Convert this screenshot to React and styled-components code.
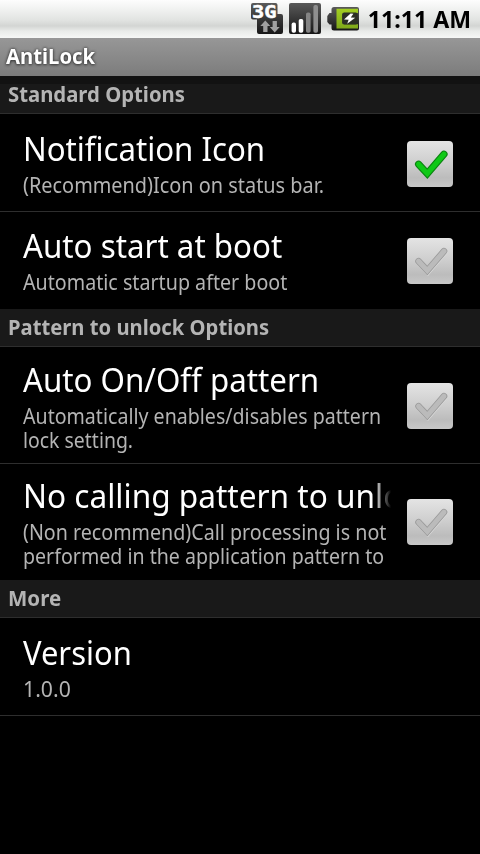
import React, { useState } from 'react';
import styled, { createGlobalStyle } from 'styled-components';

const GlobalStyle = createGlobalStyle`
  * {
    box-sizing: border-box;
  }
  body {
    margin: 0;
    background-color: #000000;
    font-family: "Noto Sans", "Open Sans", sans-serif;
  }
`;

const Screen = styled.div`
  display: flex;
  flex-direction: column;
  width: 480px;
  height: 854px;
  overflow: hidden;
  background-color: #000000;
`;

const StatusBar = styled.div`
  display: flex;
  align-items: center;
  justify-content: flex-end;
  height: 38px;
  padding-right: 9px;
  background: linear-gradient(#fdfdfd 0%, #f2f3f2 22%, #e2e4e2 52%, #d3d5d3 68%, #e9ebe9 82%, #f6f7f6 100%);
`;

const StatusIcons = styled.svg`
  width: 110px;
  height: 38px;
  flex-shrink: 0;
`;

// horizontally condensed text, $fit is the width ratio
const Text = styled.span`
  display: inline-block;
  white-space: nowrap;
  transform: scaleX(${({ $fit }) => $fit || 1});
  transform-origin: ${({ $from }) => $from || 'left'} center;
`;

const Clock = styled.div`
  width: 111px;
  font-size: 24px;
  font-weight: 700;
  line-height: 38px;
  text-align: right;
  color: #000000;
`;

const TitleBar = styled.div`
  height: 38px;
  padding-left: 6px;
  font-size: 21px;
  font-weight: 700;
  line-height: 36px;
  color: #ffffff;
  text-shadow: 0 0 3px #333333, 0 1px 3px #444444;
  background: linear-gradient(#979797, #7c7c7c);
`;

const Category = styled.div`
  height: 38px;
  padding-left: 8px;
  font-size: 21px;
  font-weight: 700;
  line-height: 37px;
  color: #b4b4b4;
  background-color: #191919;
  border-bottom: 1px solid #2e2e2e;
  box-shadow: ${({ $shaded }) => ($shaded ? 'inset 0 8px 0 #121212' : 'none')};
`;

const Row = styled.div`
  display: flex;
  height: ${({ $height }) => $height}px;
  padding-left: 23px;
  padding-right: 27px;
  border-bottom: ${({ $divider }) => ($divider ? '1px solid #2e2e2e' : 'none')};
`;

const Texts = styled.div`
  width: 369px;
  padding-top: ${({ $top }) => $top}px;
`;

const RowTitle = styled.div`
  height: 44px;
  font-size: 33px;
  line-height: 39px;
  color: #ffffff;
  mask-image: ${({ $fade }) => ($fade ? 'linear-gradient(to right, #000 349px, rgba(0, 0, 0, 0.25) 364px, transparent 368px)' : 'none')};
`;

const Summary = styled.div`
  height: 24px;
  font-size: 21px;
  line-height: 24px;
  color: #b4b4b4;
`;

const CheckButton = styled.button`
  width: 46px;
  height: 46px;
  margin-left: auto;
  margin-top: ${({ $top }) => $top}px;
  padding: 0;
  border: none;
  background: none;
  flex-shrink: 0;

  svg {
    display: block;
  }
`;

function CheckBox({ checked, top, onClick }) {
  const mark = 'M11.6 23.2 L20.3 32.6 L37 13.2';
  return (
    <CheckButton $top={top} onClick={onClick}>
      <svg width="46" height="46" viewBox="0 0 46 46" fill="none" strokeLinecap="round" strokeLinejoin="miter">
        <defs>
          <linearGradient id="box" x1="0" y1="0" x2="0" y2="1">
            <stop offset="0" stopColor="#e4e4e4" />
            <stop offset="0.5" stopColor="#cdcdcd" />
            <stop offset="0.8" stopColor="#bcbcbc" />
            <stop offset="1" stopColor="#c8c8c8" />
          </linearGradient>
        </defs>
        <rect width="46" height="46" rx="4" fill="url(#box)" />
        {!checked && <path d={mark} stroke="#dadada" strokeWidth="6.4" transform="translate(0.4 0.8)" />}
        <path d={mark} stroke={checked ? '#0b8410' : '#9a9a9a'} strokeWidth={checked ? 7.2 : 6.6} />
        <path d={mark} stroke={checked ? '#0fc916' : '#bbbbbb'} strokeWidth="5" />
      </svg>
    </CheckButton>
  );
}

function Icons() {
  return (
    <StatusIcons viewBox="250 0 110 38">
      <defs>
        <linearGradient id="dark" x1="0" y1="0" x2="0" y2="1">
          <stop offset="0" stopColor="#5a5a5a" />
          <stop offset="1" stopColor="#161616" />
        </linearGradient>
        <linearGradient id="green" x1="0" y1="0" x2="0" y2="1">
          <stop offset="0" stopColor="#a3cf22" />
          <stop offset="1" stopColor="#7fa81a" />
        </linearGradient>
      </defs>

      {/* 3G */}
      <path d="M253 3 H275.5 Q277.5 3 277.5 5 V14 H281 Q283 14 283 16 V32 Q283 34 281 34 H259 Q257 34 257 32 V19.5 H253 Q251 19.5 251 17.5 V5 Q251 3 253 3 Z" fill="url(#dark)" />
      <text x="252" y="17.6" fontFamily="DejaVu Sans Mono" fontWeight="700" fontSize="17.5" textLength="24.5" lengthAdjust="spacingAndGlyphs" fill="#fff" stroke="#fff" strokeWidth="0.5">3G</text>
      <path d="M265.3 20.5 L270.3 26 H267.5 V32 H263.2 V26 H260.3 Z" fill="#a0a0a0" />
      <path d="M274.7 32.5 L269.8 27 H272.6 V21 H276.9 V27 H279.7 Z" fill="#a0a0a0" />

      {/* signal strength */}
      <rect x="289" y="3" width="32" height="31" rx="2" fill="url(#dark)" />
      <rect x="291.6" y="22.6" width="4.4" height="10.2" rx="1.8" fill="#fff" />
      <rect x="298.7" y="19" width="4.6" height="13.8" rx="1.8" fill="#fff" />
      <rect x="306" y="12.4" width="4.6" height="20.4" rx="1.8" fill="#858585" />
      <rect x="313.4" y="5" width="4.6" height="27.8" rx="1.8" fill="#8f8f8f" />

      {/* battery */}
      <path d="M334 7 H357 Q359 7 359 9 V28.5 Q359 30.5 357 30.5 H334 Q331.5 30.5 331.5 28 V24.5 H329.5 L327.3 22 V16 L329.5 13 H331.5 V9.5 Q331.5 7 334 7 Z" fill="url(#dark)" />
      <path d="M336.5 8.8 H358 V13 H344 Q342.4 13 342.4 14.6 V22.6 Q342.4 24.2 344 24.2 H358 V28.6 H336.5 Z" fill="url(#green)" />
      <rect x="342.2" y="12.6" width="15.4" height="12" rx="2" fill="#2c2f25" />
      <path d="M350.6 13.6 L344 19.6 L348.6 19.8 L347.2 23.8 L355.2 17.8 L350.8 17.4 L353.4 13.8 Z" fill="#fff" />
    </StatusIcons>
  );
}

const sections = [
  {
    name: 'Standard Options',
    fit: 0.967,
    rows: [
      {
        id: 'icon', title: 'Notification Icon', fit: 0.944, height: 98, top: 15, checkTop: 27, divider: true,
        lines: [['(Recommend)Icon on status bar.', 0.947]],
      },
      {
        id: 'boot', title: 'Auto start at boot', fit: 0.948, height: 97, top: 14, checkTop: 26,
        lines: [['Automatic startup after boot', 0.937]],
      },
    ],
  },
  {
    name: 'Pattern to unlock Options',
    fit: 0.963,
    rows: [
      {
        id: 'auto', title: 'Auto On/Off pattern', fit: 0.947, height: 117, top: 13, checkTop: 36, divider: true,
        lines: [['Automatically enables/disables pattern', 0.933], ['lock setting.', 0.926]],
      },
      {
        id: 'call', title: 'No calling pattern to unlock', fit: 0.957, height: 116, top: 12, checkTop: 35, fade: true,
        lines: [['(Non recommend)Call processing is not', 0.937], ['performed in the application pattern to', 0.933]],
      },
    ],
  },
  {
    name: 'More',
    fit: 0.976,
    rows: [
      {
        id: 'version', title: 'Version', fit: 0.937, height: 98, top: 15, divider: true,
        lines: [['1.0.0', 1.01]],
      },
    ],
  },
];

export default function App() {
  const [checked, setChecked] = useState({ icon: true, boot: false, auto: false, call: false });

  function toggle(id) {
    setChecked({ ...checked, [id]: !checked[id] });
  }

  return (
    <Screen>
      <GlobalStyle />
      <StatusBar>
        <Icons />
        <Clock>
          <Text $fit={0.966} $from="right">11:11 AM</Text>
        </Clock>
      </StatusBar>
      <TitleBar>
        <Text $fit={0.966}>AntiLock</Text>
      </TitleBar>
      {sections.map((section, index) => (
        <React.Fragment key={section.name}>
          <Category $shaded={index === 0}>
            <Text $fit={section.fit}>{section.name}</Text>
          </Category>
          {section.rows.map((row) => (
            <Row key={row.id} $height={row.height} $divider={row.divider}>
              <Texts $top={row.top}>
                <RowTitle $fade={row.fade}>
                  <Text $fit={row.fit}>{row.title}</Text>
                </RowTitle>
                {row.lines.map(([line, fit]) => (
                  <Summary key={line}>
                    <Text $fit={fit}>{line}</Text>
                  </Summary>
                ))}
              </Texts>
              {row.id in checked && (
                <CheckBox checked={checked[row.id]} top={row.checkTop} onClick={() => toggle(row.id)} />
              )}
            </Row>
          ))}
        </React.Fragment>
      ))}
    </Screen>
  );
}
